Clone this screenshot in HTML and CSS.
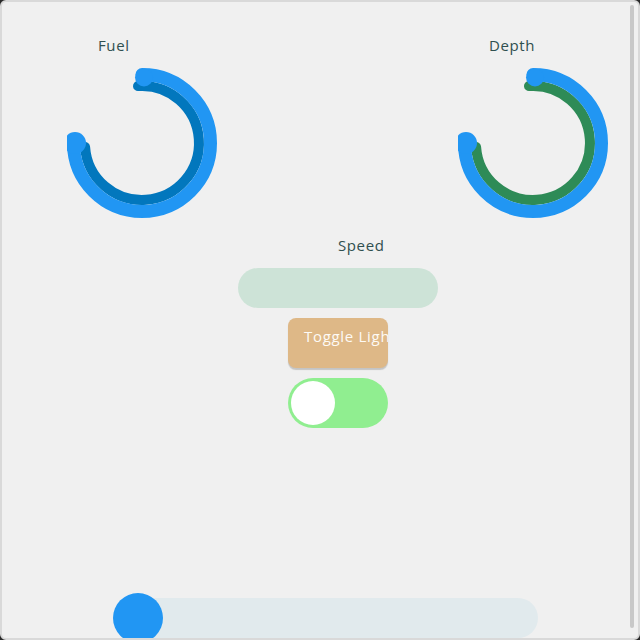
FILE: index.html
```html
<!DOCTYPE html>
<html lang="en">
<head>
<meta charset="utf-8">
<title>Dashboard</title>
<link rel="stylesheet" href="styles.css">
</head>
<body>
<div class="frame">
  <div class="main">
    <div class="gauges">
      <div class="gauge">
        <div class="label gauge-label">Fuel</div>
        <svg class="dial" width="150" height="150" viewBox="0 0 150 150">
          <path d="M71 18.1 A57 57 0 1 1 18.1 79" fill="none" stroke="#0277bd" stroke-width="10" stroke-linecap="round"/>
          <path d="M75 6.5 A68.5 68.5 0 1 1 6.5 75" fill="none" stroke="#2196f3" stroke-width="13" stroke-linecap="round"/>
          <circle cx="77" cy="9.5" r="9" fill="#2196f3"/>
          <circle cx="8" cy="75" r="11" fill="#2196f3"/>
        </svg>
      </div>
      <div class="gauge">
        <div class="label gauge-label">Depth</div>
        <svg class="dial" width="150" height="150" viewBox="0 0 150 150">
          <path d="M71 18.1 A57 57 0 1 1 18.1 79" fill="none" stroke="#2e8b57" stroke-width="10" stroke-linecap="round"/>
          <path d="M75 6.5 A68.5 68.5 0 1 1 6.5 75" fill="none" stroke="#2196f3" stroke-width="13" stroke-linecap="round"/>
          <circle cx="77" cy="9.5" r="9" fill="#2196f3"/>
          <circle cx="8" cy="75" r="11" fill="#2196f3"/>
        </svg>
      </div>
    </div>
    <div class="controls">
      <div class="label speed-label">Speed</div>
      <div class="speed-track"></div>
      <button class="light-btn">Toggle Lights</button>
      <div class="toggle"><div class="toggle-knob"></div></div>
    </div>
    <div class="bottom-slider">
      <div class="bottom-track"><div class="bottom-knob"></div></div>
    </div>
  </div>
  <div class="scrollbar"></div>
</div>
</body>
</html>
```
FILE: styles.css
```css
html {
  background: #2a2a2a;
}
body {
  margin: 0;
  width: 640px;
  height: 640px;
  font-family: "Open Sans", "DejaVu Sans", sans-serif;
}
.frame {
  box-sizing: border-box;
  width: 640px;
  height: 640px;
  border: 2px solid #d9d9d9;
  border-radius: 6px;
  background: #f0f0f0;
  display: flex;
  overflow: hidden;
}
.main {
  flex: 1;
  display: flex;
  flex-direction: column;
  overflow: hidden;
}
.scrollbar {
  width: 4px;
  margin: 3px 4px 10px 0;
  background: #c8c8c8;
  border-radius: 2px;
}
.label {
  font-size: 15px;
  line-height: 20px;
  color: #2f4f4f;
  letter-spacing: 0.6px;
}
.gauges {
  display: flex;
  justify-content: space-between;
  padding: 33px 22px 0 65px;
}
.gauge {
  display: flex;
  flex-direction: column;
  width: 150px;
}
.gauge-label {
  padding-left: 31px;
  margin-bottom: 13px;
}
.dial {
  display: block;
}
.controls {
  display: flex;
  flex-direction: column;
  align-items: center;
  width: 200px;
  margin: 17px 0 0 236px;
}
.speed-label {
  align-self: stretch;
  padding-left: 100px;
  margin-bottom: 13px;
}
.speed-track {
  width: 200px;
  height: 40px;
  border-radius: 20px;
  background: #cde3d7;
}
.light-btn {
  box-sizing: border-box;
  width: 100px;
  height: 50px;
  margin-top: 10px;
  border: none;
  border-radius: 8px;
  background: #deb887;
  box-shadow: 0 2px 1px rgba(0, 0, 0, 0.18);
  color: #fdfaf5;
  font-family: inherit;
  font-size: 15px;
  line-height: 20px;
  letter-spacing: 0.7px;
  text-align: left;
  white-space: nowrap;
  overflow: hidden;
  padding: 8px 0 0 16px;
  display: flex;
  align-items: flex-start;
}
.toggle {
  box-sizing: border-box;
  width: 100px;
  height: 50px;
  margin-top: 10px;
  border-radius: 25px;
  background: #90ee90;
  padding: 3px;
  display: flex;
  align-items: center;
}
.toggle-knob {
  width: 44px;
  height: 44px;
  border-radius: 50%;
  background: #ffffff;
}
.bottom-slider {
  margin-top: auto;
  padding-left: 111px;
}
.bottom-track {
  width: 425px;
  height: 40px;
  border-radius: 20px;
  background: #e1eaed;
  display: flex;
  align-items: center;
}
.bottom-knob {
  width: 50px;
  height: 50px;
  flex: none;
  margin: -5px 0;
  border-radius: 50%;
  background: #2196f3;
}
```
